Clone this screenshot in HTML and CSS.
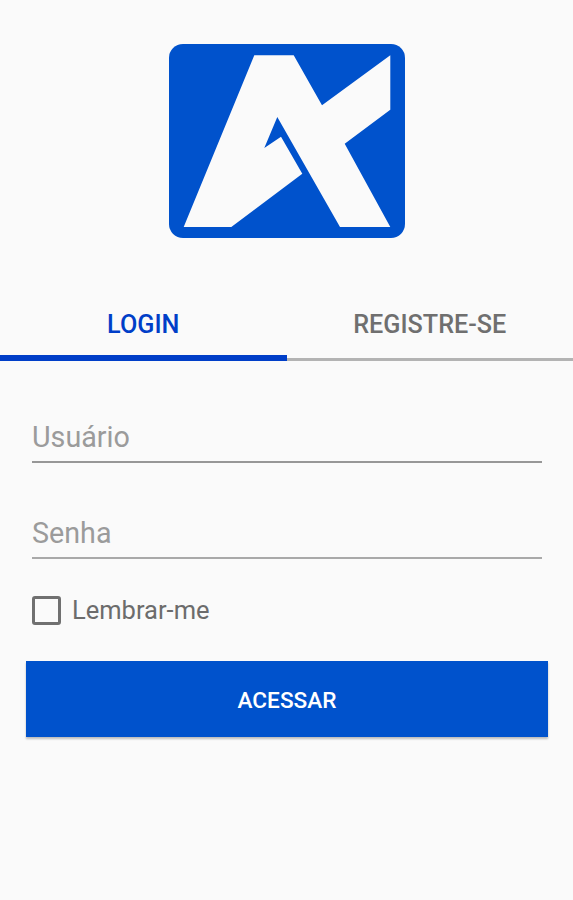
FILE: index.html
```
<!DOCTYPE html>
<html lang="pt-BR">
<head>
    <meta charset="UTF-8">
    <meta name="viewport" content="width=device-width, initial-scale=1.0">
    <title>Login</title>
    <link rel="stylesheet" href="styles.css">
</head>
<body>
    <header>
        <svg class="logo" viewBox="0 0 236 194" aria-hidden="true">
            <rect width="236" height="194" rx="14" fill="#0052cc"/>
            <path fill="#fafafa" d="M85.3 11.3H124.7L153 61.3L221.3 11.3V65.7L175.7 99.7L221.3 183H171L108.3 73L95.3 104L112 92.7L133.3 129.7L62.3 183H14.7Z"/>
        </svg>
    </header>

    <nav class="tabs">
        <button class="tab active" type="button">LOGIN</button>
        <button class="tab" type="button">REGISTRE-SE</button>
    </nav>

    <form class="login-form">
        <input class="field" type="text" placeholder="Usuário" aria-label="Usuário">
        <input class="field" type="password" placeholder="Senha" aria-label="Senha">

        <label class="remember">
            <input type="checkbox">
            <span>Lembrar-me</span>
        </label>

        <button class="submit-btn" type="button">ACESSAR</button>
    </form>
</body>
</html>
```
FILE: styles.css
```
* {
    box-sizing: border-box;
    margin: 0;
    padding: 0;
    font-family: Roboto, "Liberation Sans", sans-serif;
}

body {
    background: #fafafa;
    min-height: 100vh;
}

header {
    display: flex;
    justify-content: center;
    padding-top: 44px;
}

.logo {
    width: 236px;
    height: 194px;
}

.tabs {
    display: flex;
    margin-top: 50px;
}

.tab {
    flex: 1;
    height: 73px;
    border: none;
    background: linear-gradient(#b3b3b3, #b3b3b3) left bottom / 100% 3px no-repeat;
    color: #6f6f6f;
    font-size: 25.2px;
    font-weight: 500;
    line-height: 30px;
}

.tab.active {
    background: linear-gradient(#003ec8, #003ec8) left bottom / 100% 6px no-repeat;
    color: #003ec8;
}

.login-form {
    display: flex;
    flex-direction: column;
    padding: 48px 25px 0 26px;
}

.field {
    height: 54px;
    margin: 0 6px 42px;
    padding-top: 3px;
    border: none;
    border-bottom: 2px solid #979797;
    background: none;
    color: #333;
    font-size: 28.7px;
    outline: none;
}

.field + .field {
    margin-bottom: 35px;
    border-color: #a9a9a9;
}

.field::placeholder {
    color: #9b9b9b;
}

.remember {
    display: flex;
    align-items: center;
    height: 32px;
    margin: 0 6px 35px;
    gap: 11px;
    color: #6c6c6c;
    font-size: 25.5px;
}

.remember input {
    appearance: none;
    width: 29px;
    height: 29px;
    border: 3px solid #707070;
    border-radius: 3px;
}

.submit-btn {
    height: 76px;
    padding-top: 2px;
    border: none;
    background: #0052cc;
    box-shadow: 0 2px 2px rgba(0, 0, 0, 0.25);
    color: #fff;
    font-size: 22.6px;
    font-weight: 500;
}
```
